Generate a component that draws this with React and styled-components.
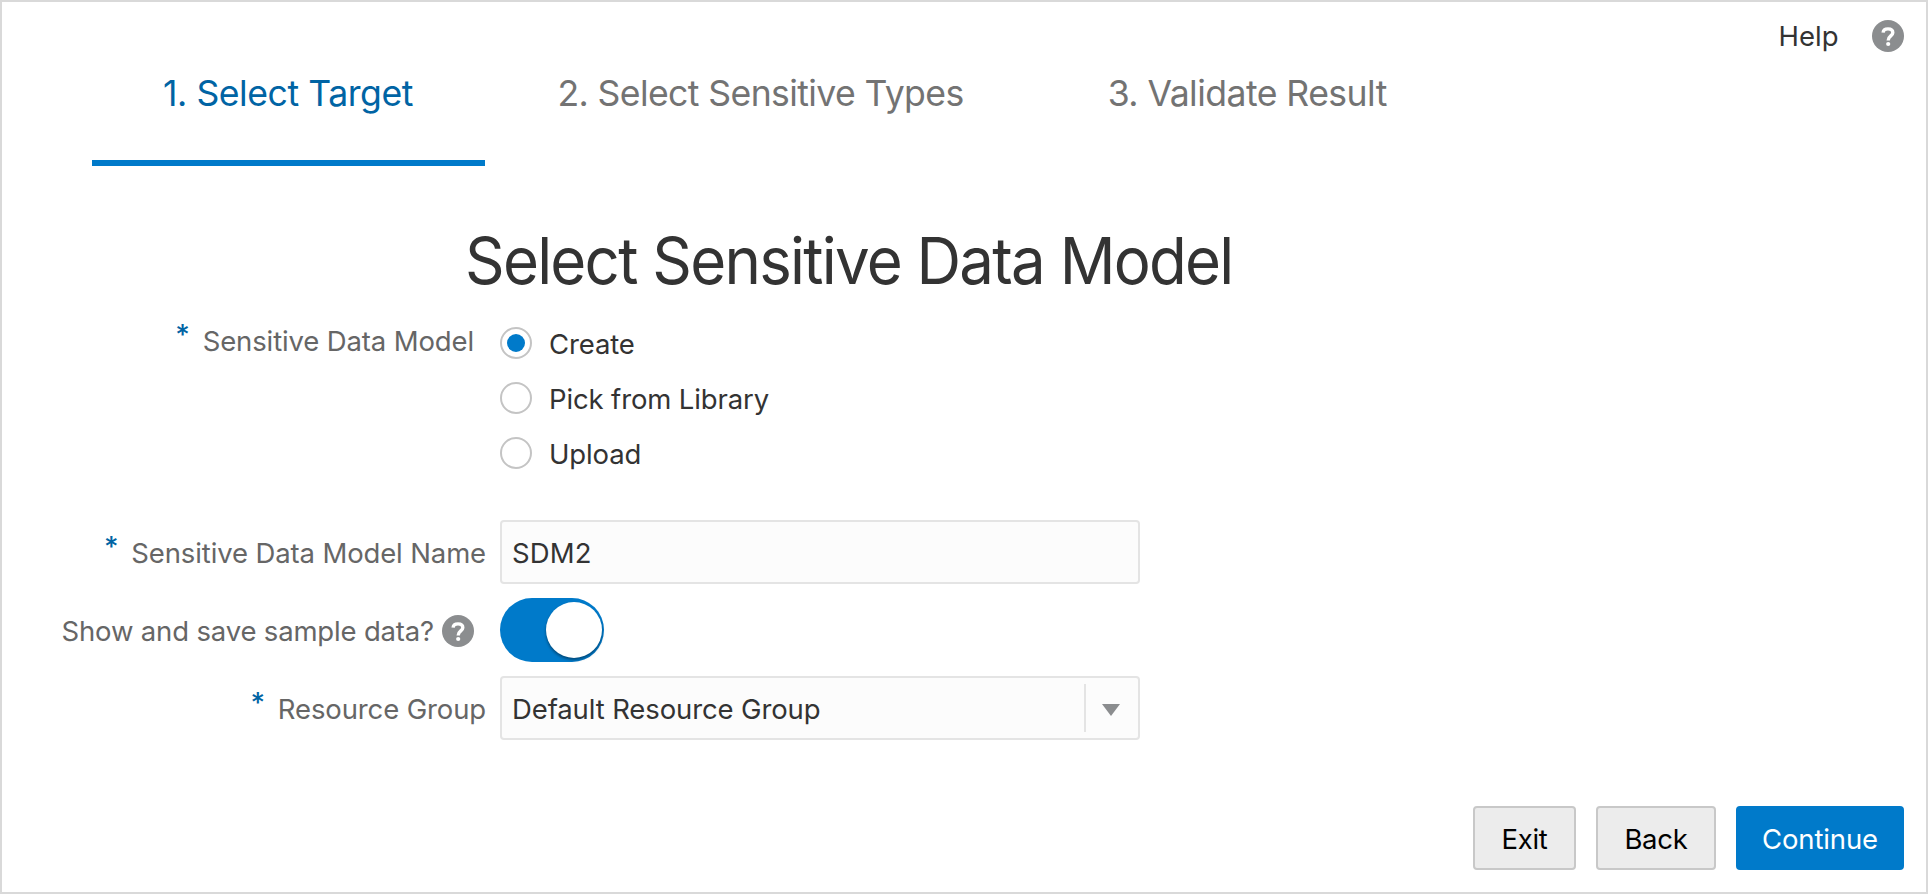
import React, { useState } from "react";
import styled, { createGlobalStyle } from "styled-components";

const GlobalStyle = createGlobalStyle`
  *, *::before, *::after { box-sizing: border-box; }
  body { margin: 0; background: #fff; }
`;

const Page = styled.div`
  width: 1928px;
  height: 894px;
  border: 2px solid #d9d9d9;
  background: #fff;
  display: flex;
  flex-direction: column;
  overflow: hidden;
  font-family: Inter, "Liberation Sans", sans-serif;
  font-size: 27.5px;
  line-height: 32px;
  letter-spacing: -0.13px;
  color: #333;
`;

const TopBar = styled.header`
  display: flex;
  justify-content: flex-end;
  align-items: center;
  gap: 33px;
  height: 50px;
  padding: 18px 22.5px 0 0;
`;

const HelpLink = styled.span`
  color: #333;
  letter-spacing: 0;
`;

const Steps = styled.nav`
  display: flex;
  height: 114px;
  padding-left: 90px;
`;

const Step = styled.div`
  padding: 19px ${(p) => (p.$active ? 72.5 : 72)}px 0 ${(p) => (p.$active ? 71 : 72)}px;
  border-bottom: 6px solid ${(p) => (p.$active ? "#007aca" : "transparent")};
  color: ${(p) => (p.$active ? "#0064a4" : "#737373")};
  font-size: 35.6px;
  line-height: 46px;
  letter-spacing: ${(p) => p.$spacing}px;
  white-space: nowrap;
`;

const Title = styled.h1`
  align-self: flex-start;
  margin: 55px 0 0 463px;
  font-size: 65px;
  font-weight: 400;
  line-height: 80px;
  letter-spacing: -1.83px;
  transform: scaleX(0.95);
  transform-origin: left;
  white-space: nowrap;
  color: #333;
`;

const Form = styled.form`
  display: flex;
  flex-direction: column;
  gap: 14px;
  margin-top: 26px;
  width: 1138px;
`;

const Row = styled.div`
  display: grid;
  grid-template-columns: 484px 640px;
  column-gap: 14px;
  align-items: ${(p) => (p.$top ? "start" : "center")};
  padding-bottom: ${(p) => (p.$top ? 37 : 0)}px;
`;

const Label = styled.label`
  display: flex;
  justify-content: flex-end;
  align-items: center;
  padding-right: ${(p) => (p.$inset ? 12 : 0)}px;
  margin-top: ${(p) => (p.$raised ? -2 : 2)}px;
  color: #666;
  white-space: nowrap;
`;

const Required = styled.span`
  margin-right: 13px;
  align-self: flex-start;
  line-height: 20px;
  font-size: 28px;
  font-weight: 500;
  color: #0064a4;
`;

const RadioList = styled.div`
  display: flex;
  flex-direction: column;
  gap: 23px;
`;

const RadioOption = styled.div`
  display: flex;
  align-items: center;
  gap: 17px;
  height: 32px;
`;

const RadioDot = styled.span`
  display: grid;
  place-items: center;
  width: 32px;
  height: 32px;
  border: 2px solid #c4c4c4;
  border-radius: 50%;
  background: #fff;

  &::after {
    content: "";
    width: 18px;
    height: 18px;
    border-radius: 50%;
    background: ${(p) => (p.$checked ? "#007aca" : "transparent")};
  }
`;

const RadioText = styled.span`
  padding-top: 1px;
`;

const Field = styled.div`
  display: flex;
  align-items: center;
  height: 64px;
  padding-left: 10px;
  border: 2px solid #e4e4e4;
  border-radius: 4px;
  background: #fcfcfc;
  white-space: nowrap;
`;

const FieldText = styled.span`
  flex: 1;
  padding-top: 1px;
  letter-spacing: ${(p) => p.$spacing}px;
`;

const ArrowBox = styled.span`
  display: flex;
  align-items: center;
  justify-content: center;
  width: 54px;
  height: 48px;
  padding: 4px 2px 0 0;
  border-left: 2px solid #e4e4e4;
`;

const Toggle = styled.button`
  display: flex;
  align-items: center;
  justify-content: ${(p) => (p.$on ? "flex-end" : "flex-start")};
  width: 104px;
  height: 64px;
  padding: 0 2px;
  border: 0;
  border-radius: 32px;
  background: ${(p) => (p.$on ? "#007aca" : "#c4c4c4")};
`;

const Knob = styled.span`
  width: 56px;
  height: 56px;
  border-radius: 50%;
  background: #fff;
  box-shadow: 0 2px 3px rgba(0, 0, 0, 0.4);
`;

const Footer = styled.footer`
  display: flex;
  justify-content: flex-end;
  gap: 20px;
  margin-top: 66px;
  padding-right: 22px;
`;

const Button = styled.button`
  width: ${(p) => p.$width}px;
  height: 64px;
  padding: 1px 0 0;
  border: 2px solid ${(p) => (p.$primary ? "#007aca" : "#c8c8c8")};
  border-radius: 4px;
  background: ${(p) => (p.$primary ? "#007aca" : "#ececec")};
  color: ${(p) => (p.$primary ? "#fff" : "#000")};
  font: inherit;
  letter-spacing: ${(p) => (p.$primary ? -0.13 : -0.25)}px;
`;

const HelpSvg = styled.svg`
  display: block;
  flex: none;
  margin-left: ${(p) => p.$gap || 0}px;
`;

function HelpIcon({ gap }) {
  return (
    <HelpSvg $gap={gap} width="32" height="32" viewBox="0 0 32 32" fill="none">
      <circle cx="16" cy="16" r="16" fill="#8b8d8f" />
      <path
        d="M11.1 12.6C11.3 10.2 13.3 8.9 16 8.9C18.9 8.9 20.8 10.4 20.8 12.7C20.8 16 16.2 16 16.2 20.4"
        stroke="#fff"
        strokeWidth="3.4"
      />
      <circle cx="16.2" cy="24" r="2.1" fill="#fff" />
    </HelpSvg>
  );
}

const steps = [
  { text: "1. Select Target", spacing: -0.44 },
  { text: "2. Select Sensitive Types", spacing: -0.6 },
  { text: "3. Validate Result", spacing: -0.54 },
];
const sources = ["Create", "Pick from Library", "Upload"];

const SampleText = styled.span`
  letter-spacing: -0.17px;
`;

export default function App() {
  const [source, setSource] = useState("Create");
  const [sample, setSample] = useState(true);

  return (
    <>
      <GlobalStyle />
      <Page>
        <TopBar>
          <HelpLink>Help</HelpLink>
          <HelpIcon />
        </TopBar>
        <Steps>
          {steps.map((step, i) => (
            <Step key={step.text} $active={i === 0} $spacing={step.spacing}>
              {step.text}
            </Step>
          ))}
        </Steps>
        <Title>Select Sensitive Data Model</Title>
        <Form>
          <Row $top>
            <Label $inset $raised>
              <Required>*</Required>Sensitive Data Model
            </Label>
            <RadioList>
              {sources.map((name) => (
                <RadioOption key={name} onClick={() => setSource(name)}>
                  <RadioDot $checked={source === name} />
                  <RadioText>{name}</RadioText>
                </RadioOption>
              ))}
            </RadioList>
          </Row>
          <Row>
            <Label>
              <Required>*</Required>Sensitive Data Model Name
            </Label>
            <Field>
              <FieldText $spacing={0.1}>SDM2</FieldText>
            </Field>
          </Row>
          <Row>
            <Label $inset>
              <SampleText>Show and save sample data?</SampleText>
              <HelpIcon gap={8} />
            </Label>
            <Toggle type="button" $on={sample} onClick={() => setSample(!sample)}>
              <Knob />
            </Toggle>
          </Row>
          <Row>
            <Label>
              <Required>*</Required>Resource Group
            </Label>
            <Field>
              <FieldText $spacing={-0.12}>Default Resource Group</FieldText>
              <ArrowBox>
                <svg width="18" height="12" viewBox="0 0 18 12">
                  <path d="M0 0H18L9 12Z" fill="#8b8d8f" />
                </svg>
              </ArrowBox>
            </Field>
          </Row>
        </Form>
        <Footer>
          <Button $width={103}>Exit</Button>
          <Button $width={120}>Back</Button>
          <Button $width={168} $primary>
            Continue
          </Button>
        </Footer>
      </Page>
    </>
  );
}
